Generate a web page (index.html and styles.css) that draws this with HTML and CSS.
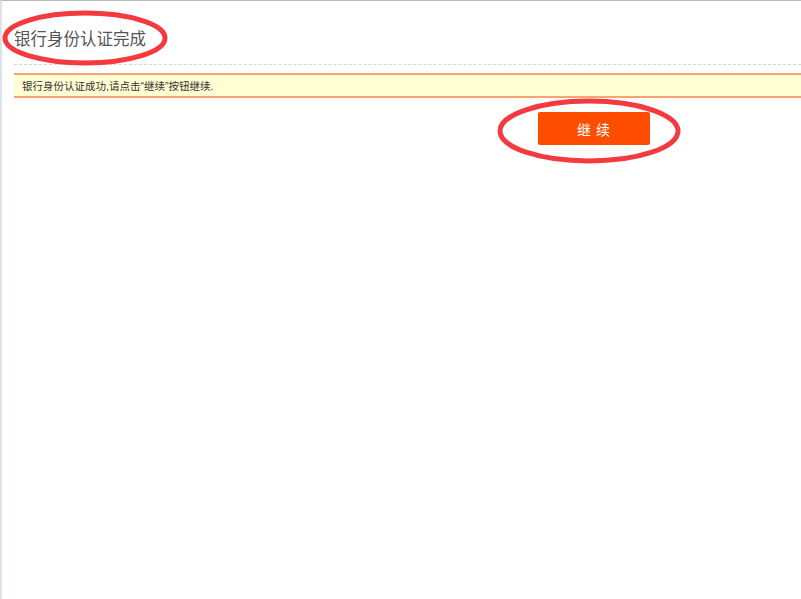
FILE: index.html
```html
<!DOCTYPE html>
<html>
<head>
    <title>银行身份认证完成</title>
    <link rel="stylesheet" href="styles.css">
</head>
<body>
    <div class="page">
        <h2 class="page-title">银行身份认证完成</h2>
        <div class="divider"></div>
        <div class="notice">银行身份认证成功,请点击“继续”按钮继续.</div>
        <div class="actions">
            <button class="btn-continue">继 续</button>
        </div>

        <!-- annotation marks -->
        <svg class="mark" width="801" height="599" viewBox="0 0 801 599">
            <ellipse cx="85" cy="38" rx="80" ry="25" fill="none" stroke="#f53a3f" stroke-width="5"/>
            <ellipse cx="589" cy="131" rx="89" ry="30" fill="none" stroke="#f53a3f" stroke-width="5"/>
        </svg>
    </div>
</body>
</html>
```

FILE: styles.css
```css
html, body {
    margin: 0;
    padding: 0;
    background: #fff;
}
.page {
    position: relative;
    height: 598px;
    border-top: 1px solid #b8b8b8;
    border-left: 2px solid #dde1e8;
    font-family: "Noto Sans CJK SC", "Liberation Sans", sans-serif;
    overflow: hidden;
}
.page-title {
    margin: 0;
    padding: 26px 0 0 12px;
    height: 37px;
    line-height: 22px;
    font-size: 16.5px;
    font-weight: normal;
    color: #555;
}
.divider {
    margin-left: 12px;
    border-top: 1px dashed #d6d6d6;
}
.notice {
    margin: 8px 0 0 12px;
    padding: 2px 8px 0;
    height: 19px;
    line-height: 19px;
    background: #fffdd1;
    border-top: 2px solid #f8a275;
    border-bottom: 2px solid #f8a275;
    font-family: "Liberation Sans", "Noto Sans CJK SC", sans-serif;
    font-size: 10.5px;
    color: #333;
}
.actions {
    display: flex;
    padding: 14px 0 0 536px;
}
.btn-continue {
    width: 112px;
    height: 33px;
    border: none;
    border-radius: 2px;
    background: #ff4d00;
    color: #fff;
    font-family: inherit;
    font-size: 14px;
    letter-spacing: 1px;
    cursor: pointer;
}
.mark {
    position: absolute;
    left: -2px;
    top: -1px;
    pointer-events: none;
}
```
